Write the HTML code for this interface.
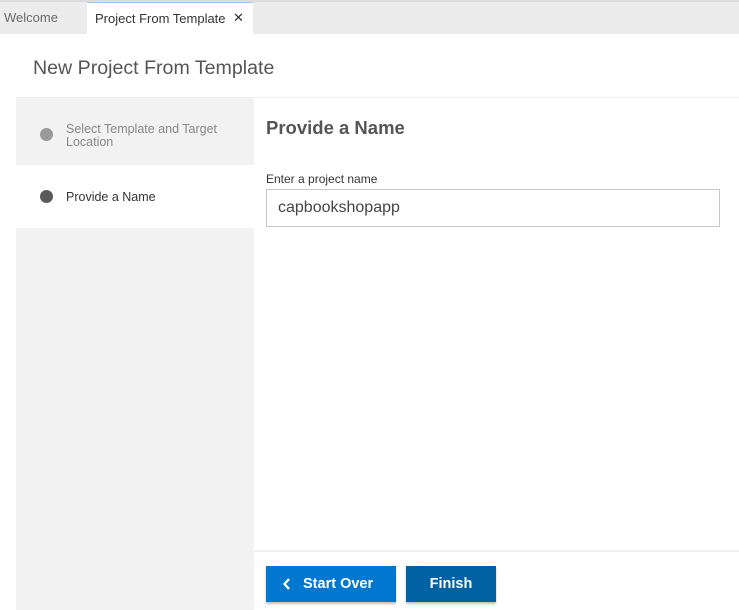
<!DOCTYPE html>
<html><head><style>
body{margin:0;width:739px;height:610px;background:#fff;font-family:"Liberation Sans",sans-serif;position:relative;overflow:hidden}
.abs{position:absolute}
</style></head><body>
<div class="abs" style="left:0;top:0;width:739px;height:2px;background:#dcdcdc"></div>
<div class="abs" style="left:0;top:2px;width:739px;height:32px;background:#ececec"></div>
<div class="abs" style="left:4px;top:10px;font-size:13px;color:#6a6a6a">Welcome</div>
<div class="abs" style="left:87px;top:2px;width:166px;height:32px;background:#fff;border-top:1px solid #9ccbee;box-sizing:border-box"></div>
<div class="abs" style="left:95px;top:11px;font-size:13px;color:#333">Project From Template</div>
<div class="abs" style="left:233px;top:10px;font-size:13px;color:#333">✕</div>
<div class="abs" style="left:33px;top:57px;font-size:19.6px;color:#555">New Project From Template</div>
<div class="abs" style="left:16px;top:97px;width:723px;height:1px;background:#eee"></div>
<div class="abs" style="left:16px;top:98px;width:238px;height:512px;background:#f2f2f2"></div>
<div class="abs" style="left:16px;top:165px;width:238px;height:63px;background:#fff"></div>
<div class="abs" style="left:40px;top:128px;width:13px;height:13px;border-radius:50%;background:#9a9a9a"></div>
<div class="abs" style="left:66px;top:123px;font-size:12.5px;color:#888;line-height:13px">Select Template and Target<br>Location</div>
<div class="abs" style="left:40px;top:190px;width:13px;height:13px;border-radius:50%;background:#5a5a5a"></div>
<div class="abs" style="left:66px;top:190px;font-size:12.5px;color:#333">Provide a Name</div>
<div class="abs" style="left:266px;top:117px;font-size:18.5px;font-weight:bold;color:#555">Provide a Name</div>
<div class="abs" style="left:266px;top:172px;font-size:12px;color:#333">Enter a project name</div>
<div class="abs" style="left:266px;top:189px;width:454px;height:38px;border:1px solid #c8c8c8;box-sizing:border-box"></div>
<div class="abs" style="left:278px;top:199px;font-size:16px;color:#444">capbookshopapp</div>
<div class="abs" style="left:254px;top:550px;width:485px;height:2px;background:#f0f0f0"></div>
<div class="abs" style="left:266px;top:566px;width:130px;height:36px;background:#0078d0;box-shadow:0 2px 2px rgba(0,0,0,.25);color:#fff;font-weight:bold;font-size:14.5px;line-height:36px"><svg style="position:absolute;left:283px;left:17px;top:12px" width="8" height="12" viewBox="0 0 8 12"><path d="M6 1L1.5 6L6 11" stroke="#fff" stroke-width="2.4" fill="none"/></svg><span style="position:absolute;left:37px">Start Over</span></div>
<div class="abs" style="left:406px;top:566px;width:90px;height:36px;background:#0062a3;box-shadow:0 2px 2px rgba(0,0,0,.25);color:#fff;font-weight:bold;font-size:14.5px;line-height:36px;text-align:center">Finish</div>
</body></html>
